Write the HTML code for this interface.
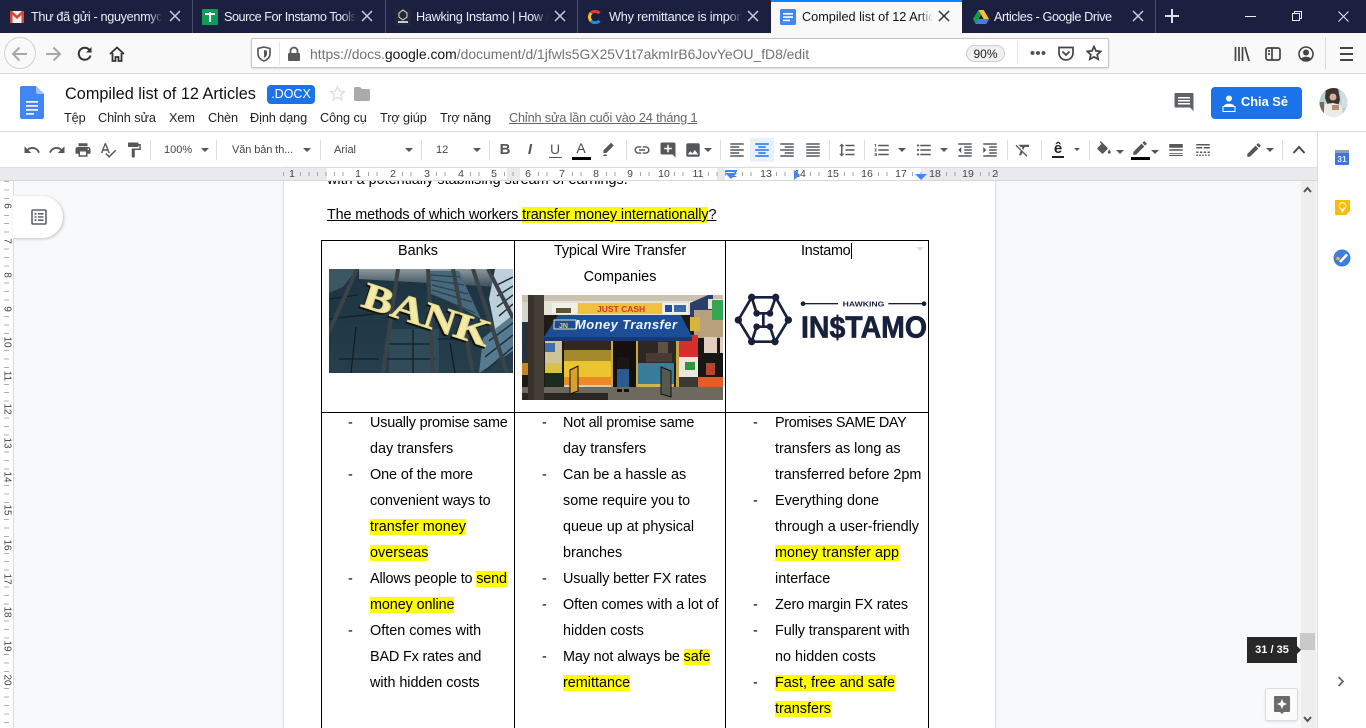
<!DOCTYPE html>
<html><head><meta charset="utf-8"><title>Compiled list of 12 Articles</title>
<style>
html,body{margin:0;padding:0;width:1366px;height:728px;overflow:hidden;background:#f8f9fa;font-family:"Liberation Sans","Noto Sans CJK SC",sans-serif;}
.a,svg.i,.t,.l,.m,.n,.v,.x,.c,.s,.tb{position:absolute}
svg{display:block;overflow:hidden}
.t{top:9px;height:17px;line-height:17px;font-size:12.7px;color:#eceef4;white-space:nowrap;overflow:hidden}
.t i{position:absolute;right:0;top:0;width:14px;height:17px;background:linear-gradient(90deg,rgba(28,32,64,0),#1c2040)}
.x{top:10px;width:12px;height:12px}
.s{top:0;width:1px;height:33px;background:#4a4e6b}
.m{top:110px;font-size:12.7px;line-height:17px;color:#222;white-space:nowrap;letter-spacing:-.08px}
.tb{top:143px;font-size:11px;line-height:15px;color:#444;white-space:nowrap}
.sp{position:absolute;top:140px;width:1px;height:20px;background:#dadce0}
.c{top:148px;width:0;height:0;border-left:4px solid transparent;border-right:4px solid transparent;border-top:4px solid #555}
svg.i{width:18px;height:18px;top:141px;fill:#55585b}
.n{top:168px;font-size:10.5px;line-height:12px;color:#444;width:16px;text-align:center}
.v{left:0;width:13px;height:12px;line-height:12px;font-size:10px;color:#444;text-align:center;transform:rotate(90deg)}
.l{height:26px;line-height:26px;font-size:14.4px;color:#000;white-space:nowrap;margin-top:1px}
.l b{font-weight:normal;background:#ff0}
</style></head><body>

<!-- Tab bar -->
<div class="a" style="left:0;top:0;width:1366px;height:33px;background:#1c2040"></div>
<div class="s" style="left:192px"></div><div class="s" style="left:385px"></div><div class="s" style="left:577px"></div><div class="s" style="left:1155px"></div>
<div class="a" style="left:771px;top:0;width:191px;height:33px;background:#f9f9fa;border-top:2px solid #0a84ff;box-sizing:border-box"></div>

<svg class="a" style="left:10px;top:10px" width="14" height="14" viewBox="0 0 14 14"><rect y="1" width="14" height="12" fill="#eee"/><path d="M0 1h2l5 4.500L12 1h2v12h-2.500V5L7 9 2.500 5v8H0z" fill="#d44638"/></svg>
<div class="t" style="left:31px;width:132px;letter-spacing:-.35px">Thư đã gửi - nguyenmych<i></i></div>
<svg class="x" style="left:169px" viewBox="0 0 12 12"><path d="M1 1l10 10M11 1L1 11" stroke="#ccced8" stroke-width="1.500"/></svg>

<div class="a" style="left:202px;top:9px;width:16px;height:16px;background:#0f9d58;border-radius:1px"></div>
<div class="a" style="left:205px;top:13px;width:10px;height:2px;background:#fff"></div>
<div class="a" style="left:209px;top:12px;width:2px;height:10px;background:#fff"></div>
<div class="t" style="left:224px;width:132px;letter-spacing:-.5px">Source For Instamo Tools<i></i></div>
<svg class="x" style="left:361px" viewBox="0 0 12 12"><path d="M1 1l10 10M11 1L1 11" stroke="#ccced8" stroke-width="1.500"/></svg>

<svg class="a" style="left:395px;top:9px" width="16" height="16" viewBox="0 0 16 16"><rect width="16" height="16" fill="#242736"/><path d="M8 1l4 3v4l-4 3-4-3V4z" fill="none" stroke="#ddd"/><rect x="3" y="12" width="10" height="2" fill="#ccc"/></svg>
<div class="t" style="left:416px;width:132px;letter-spacing:-.3px">Hawking Instamo | How r<i></i></div>
<svg class="x" style="left:554px" viewBox="0 0 12 12"><path d="M1 1l10 10M11 1L1 11" stroke="#ccced8" stroke-width="1.500"/></svg>

<svg class="a" style="left:588px;top:10px" width="14" height="14" viewBox="0 0 14 14" fill="none" stroke-width="3"><path d="M11.500 3.200A6 6 0 0 0 3 3" stroke="#e53935"/><path d="M3 3a6 6 0 0 0 0 8" stroke="#fbc02d"/><path d="M3 11a6 6 0 0 0 8.500-.200" stroke="#1e88e5"/></svg>
<div class="t" style="left:609px;width:133px;letter-spacing:-.2px">Why remittance is import<i></i></div>
<svg class="x" style="left:747px" viewBox="0 0 12 12"><path d="M1 1l10 10M11 1L1 11" stroke="#ccced8" stroke-width="1.500"/></svg>

<svg class="a" style="left:780px;top:9px" width="16" height="16" viewBox="0 0 16 16"><rect width="16" height="16" rx="1.500" fill="#4285f4"/><path d="M3 4h10v1.600H3zM3 7.300h10v1.600H3zM3 10.600h7v1.600H3z" fill="#fff"/></svg>
<div class="t" style="left:802px;width:131px;color:#111">Compiled list of 12 Articles<i style="background:linear-gradient(90deg,rgba(249,249,250,0),#f9f9fa)"></i></div>
<svg class="x" style="left:938px" viewBox="0 0 12 12"><path d="M1 1l10 10M11 1L1 11" stroke="#333" stroke-width="1.500"/></svg>

<svg class="a" style="left:973px;top:10px" width="16" height="14" viewBox="0 0 16 14"><path d="M5.300 0h5.400L16 9h-5.300z" fill="#fbc02d"/><path d="M5.300 0L0 9l2.700 5 5.300-9z" fill="#0f9d58"/><path d="M2.700 14h10.600L16 9H5.300z" fill="#3f7ee8"/></svg>
<div class="t" style="left:994px;width:130px;letter-spacing:-.4px">Articles - Google Drive</div>
<svg class="x" style="left:1132px" viewBox="0 0 12 12"><path d="M1 1l10 10M11 1L1 11" stroke="#ccced8" stroke-width="1.500"/></svg>

<svg class="a" style="left:1164px;top:8px" width="16" height="16" viewBox="0 0 16 16"><path d="M8 1v14M1 8h14" stroke="#dfe0e8" stroke-width="2"/></svg>
<svg class="a" style="left:1245px;top:15px" width="12" height="3" viewBox="0 0 12 3"><rect y="1" width="11" height="1" fill="#eee"/></svg>
<svg class="a" style="left:1291px;top:10px" width="12" height="12" viewBox="0 0 12 12" fill="none" stroke="#eee"><rect x="1.500" y="3.500" width="7" height="7"/><path d="M3.500 3.500v-2h7v7h-2"/></svg>
<svg class="a" style="left:1338px;top:11px" width="11" height="11" viewBox="0 0 11 11"><path d="M.5.500l10 10M10.500.500l-10 10" stroke="#eee"/></svg>

<!-- Firefox nav -->
<div class="a" style="left:0;top:33px;width:1366px;height:40px;background:#f9f9fa;border-bottom:1px solid #d7d7db"></div>
<div class="a" style="left:4px;top:37px;width:32px;height:32px;border:1px solid #d0d0d4;border-radius:50%;box-sizing:border-box"></div>
<svg class="a" style="left:11px;top:45px" width="18" height="18" viewBox="0 0 18 18" fill="none" stroke="#a8a8ab" stroke-width="2"><path d="M16 9H2M8.500 2.500L2 9l6.500 6.500"/></svg>
<svg class="a" style="left:44px;top:45px" width="18" height="18" viewBox="0 0 18 18" fill="none" stroke="#a8a8ab" stroke-width="2"><path d="M2 9h14M9.500 2.500L16 9l-6.500 6.500"/></svg>
<svg class="a" style="left:77px;top:46px" width="16" height="16" viewBox="0 0 16 16" fill="none" stroke="#333" stroke-width="2"><path d="M13.500 9.500A6 6 0 1 1 12 3.500L14 6"/><path d="M14.500 1v5.500H9" fill="#333" stroke="none"/></svg>
<svg class="a" style="left:109px;top:46px" width="16" height="16" viewBox="0 0 16 16" fill="none" stroke="#333" stroke-width="1.800"><path d="M1 8l7-6.500L15 8M3.500 7v8h3v-4h3v4h3V7"/></svg>

<div class="a" style="left:251px;top:38px;width:858px;height:30px;background:#fff;border:1px solid #c5c5c8;border-radius:2px;box-sizing:border-box;box-shadow:0 1px 2px rgba(0,0,0,.12)"></div>
<svg class="a" style="left:257px;top:46px" width="14" height="16" viewBox="0 0 14 16" fill="none" stroke="#555" stroke-width="1.600"><path d="M7 1l6 1.500V8c0 3.500-3 6-6 7-3-1-6-3.500-6-7V2.500z"/><path d="M7 4l3 .800V8c0 2-1.500 3-3 3.800z" fill="#555" stroke="none"/></svg>
<div class="a" style="left:279px;top:42px;width:1px;height:23px;background:#e4e4e6"></div>
<svg class="a" style="left:287px;top:46px" width="14" height="16" viewBox="0 0 14 16"><path d="M2 7h10a1 1 0 0 1 1 1v6a1 1 0 0 1-1 1H2a1 1 0 0 1-1-1V8a1 1 0 0 1 1-1z" fill="#595959"/><path d="M3.500 7V5a3.500 3.500 0 0 1 7 0v2" fill="none" stroke="#595959" stroke-width="1.800"/></svg>
<div class="a" style="left:310px;top:45px;width:520px;height:18px;line-height:18px;font-size:13.9px;color:#737373;white-space:nowrap">https://docs.<span style="color:#111">google.com</span>/document/d/1jfwls5GX25V1t7akmIrB6JovYeOU_fD8/edit</div>
<div class="a" style="left:966px;top:45px;width:39px;height:17px;line-height:16px;text-align:center;background:#f0f0f1;border:1px solid #cfcfd2;border-radius:9px;font-size:12px;color:#222;box-sizing:border-box">90%</div>
<div class="a" style="left:1017px;top:42px;width:1px;height:22px;background:#e4e4e6"></div>
<svg class="a" style="left:1030px;top:50px" width="16" height="6" viewBox="0 0 16 6" fill="#555"><circle cx="2.500" cy="3" r="2"/><circle cx="8" cy="3" r="2"/><circle cx="13.500" cy="3" r="2"/></svg>
<svg class="a" style="left:1058px;top:45px" width="16" height="16" viewBox="0 0 16 16" fill="none" stroke="#444" stroke-width="1.700"><path d="M1 2.500h14v5.500a7 7 0 0 1-14 0z"/><path d="M4.500 6.500L8 10l3.500-3.500"/></svg>
<svg class="a" style="left:1086px;top:45px" width="16" height="16" viewBox="0 0 16 16" fill="none" stroke="#444" stroke-width="1.700"><path d="M8 1.500l2 4.400 4.700.5-3.500 3.200 1 4.700L8 11.900l-4.200 2.400 1-4.700L1.300 6.400 6 5.900z"/></svg>
<svg class="a" style="left:1234px;top:46px" width="16" height="16" viewBox="0 0 16 16" fill="none" stroke="#444" stroke-width="1.700"><path d="M1.500 1v14M5 1v14M8.500 1v14M11 1l4 14"/></svg>
<svg class="a" style="left:1265px;top:46px" width="16" height="16" viewBox="0 0 16 16" fill="none" stroke="#444" stroke-width="1.700"><rect x="1" y="2" width="14" height="12" rx="2"/><path d="M7 2v12M3 5h2M3 8h2"/></svg>
<svg class="a" style="left:1298px;top:46px" width="16" height="16" viewBox="0 0 16 16"><circle cx="8" cy="8" r="7" fill="none" stroke="#444" stroke-width="1.600"/><circle cx="8" cy="6.500" r="3" fill="#444"/><path d="M3 13c1-3 9-3 10 0-2 2-8 2-10 0z" fill="#444"/></svg>
<div class="a" style="left:1325px;top:37px;width:1px;height:32px;background:#dcdcde"></div>
<svg class="a" style="left:1340px;top:46px" width="14" height="15" viewBox="0 0 14 15" fill="#444"><rect y="1" width="13" height="2"/><rect y="7" width="13" height="2"/><rect y="13" width="13" height="2"/></svg>

<!-- Docs header -->
<div class="a" style="left:0;top:74px;width:1366px;height:58px;background:#fff"></div>
<svg class="a" style="left:20px;top:86px" width="24" height="33" viewBox="0 0 24 33"><path d="M2 0h14l8 8v23a2 2 0 0 1-2 2H2a2 2 0 0 1-2-2V2a2 2 0 0 1 2-2z" fill="#4285f4"/><path d="M16 0l8 8h-6a2 2 0 0 1-2-2z" fill="#a1c2fa"/><path d="M6 15h12v1.800H6zM6 19h12v1.800H6zM6 23h12v1.800H6zM6 27h8v1.800H6z" fill="#f1f1f1"/></svg>
<div class="a" style="left:65px;top:84px;height:21px;line-height:21px;font-size:16.3px;color:#111;white-space:nowrap">Compiled list of 12 Articles</div>
<div class="a" style="left:267px;top:85px;width:48px;height:19px;line-height:19px;background:#1a73e8;border-radius:4px;color:#fff;font-size:12.5px;text-align:center">.DOCX</div>
<svg class="a" style="left:329px;top:85px" width="17" height="17" viewBox="0 0 24 24" fill="none" stroke="#e0e0e0" stroke-width="2"><path d="M12 2.500l2.900 6.300 6.800.7-5.100 4.600 1.400 6.800L12 17.400l-6 3.500 1.400-6.800-5.100-4.600 6.800-.7z"/></svg>
<svg class="a" style="left:354px;top:87px" width="16" height="14" viewBox="0 0 16 14"><path d="M1.500 0H6l2 2h6.500A1.500 1.500 0 0 1 16 3.500v9a1.500 1.500 0 0 1-1.500 1.500h-13A1.500 1.500 0 0 1 0 12.500v-11A1.500 1.500 0 0 1 1.500 0z" fill="#aaa"/></svg>
<div class="m" style="left:64px">Tệp</div>
<div class="m" style="left:98px">Chỉnh sửa</div>
<div class="m" style="left:169px">Xem</div>
<div class="m" style="left:208px">Chèn</div>
<div class="m" style="left:250px">Định dạng</div>
<div class="m" style="left:320px">Công cụ</div>
<div class="m" style="left:380px">Trợ giúp</div>
<div class="m" style="left:440px">Trợ năng</div>
<div class="m" style="left:509px;color:#666;text-decoration:underline;letter-spacing:-.15px">Chỉnh sửa lần cuối vào 24 tháng 1</div>
<svg class="a" style="left:1174px;top:92px" width="20" height="20" viewBox="0 0 20 20"><path d="M1.500 1h17a1 1 0 0 1 1 1v17l-3.500-3.500H1.500a1 1 0 0 1-1-1V2a1 1 0 0 1 1-1z" fill="#5f6368"/><path d="M4 5h12v1.500H4zM4 8h12v1.500H4zM4 11h12v1.500H4z" fill="#fff"/></svg>
<div class="a" style="left:1211px;top:87px;width:91px;height:32px;background:#1a73e8;border-radius:4px"></div>
<svg class="a" style="left:1222px;top:95px" width="14" height="18" viewBox="0 0 14 18" fill="#fff"><circle cx="7" cy="3.500" r="3"/><path d="M2 11c0-3 10-3 10 0z"/><path d="M1 11.500h12v5H1z" fill="none" stroke="#fff"/></svg>
<div class="a" style="left:1241px;top:94px;line-height:16px;font-size:12.8px;font-weight:bold;color:#fff;white-space:nowrap">Chia Sẻ</div>
<svg class="a" style="left:1319px;top:88px" width="29" height="29" viewBox="0 0 29 29"><defs><clipPath id="av"><ellipse cx="14.500" cy="14.500" rx="14" ry="14.500"/></clipPath></defs><g clip-path="url(#av)"><rect width="29" height="29" fill="#b9cfd0"/><path d="M7 0h12l2 12-3 8H10L6 10z" fill="#3b3430"/><path d="M21 0h8v20h-6z" fill="#cfe0e2"/><circle cx="14" cy="9" r="3.500" fill="#d8b09c"/><path d="M4 29l2-13 8-1 8 2 3 12z" fill="#ecebe8"/><path d="M0 14h5v15H0z" fill="#7a6a5c"/><rect x="13" y="17" width="7" height="5" fill="#b98a6f"/></g></svg>

<!-- Toolbar -->
<div class="a" style="left:0;top:131px;width:1317px;height:37px;background:#fff;border-top:1px solid #dadce0;box-sizing:border-box"></div>
<svg class="i" style="left:23px" viewBox="0 0 24 24"><path d="M12.500 8c-2.650 0-5.050.99-6.900 2.600L2 7v9h9l-3.620-3.620c1.390-1.160 3.160-1.880 5.120-1.880 3.540 0 6.550 2.310 7.600 5.500l2.370-.78C21.080 11.030 17.150 8 12.500 8z"/></svg>
<svg class="i" style="left:48px" viewBox="0 0 24 24"><path d="M18.400 10.600C16.550 8.990 14.150 8 11.500 8c-4.650 0-8.580 3.030-9.960 7.220L3.900 16c1.050-3.190 4.050-5.500 7.600-5.500 1.950 0 3.730.72 5.120 1.880L13 16h9V7l-3.600 3.600z"/></svg>
<svg class="i" style="left:74px" viewBox="0 0 24 24"><path d="M19 8H5c-1.660 0-3 1.340-3 3v6h4v4h12v-4h4v-6c0-1.660-1.340-3-3-3zm-3 11H8v-5h8v5zm3-7c-.55 0-1-.45-1-1s.45-1 1-1 1 .45 1 1-.45 1-1 1zm-1-9H6v4h12V3z"/></svg>
<svg class="i" style="left:99px" viewBox="0 0 24 24"><path d="M12.450 16h2.090L9.430 3H7.570L2.460 16h2.090l1.120-3h5.640l1.140 3zm-6.020-5L8.500 5.480 10.570 11H6.430zm15.160.59l-8.090 8.090L9.830 16l-1.410 1.410 5.090 5.090L23 13l-1.410-1.410z"/></svg>
<svg class="i" style="left:125px" viewBox="0 0 24 24"><path d="M18 4V3c0-.55-.45-1-1-1H5c-.55 0-1 .45-1 1v4c0 .55.45 1 1 1h12c.55 0 1-.45 1-1V6h1v4H9v11c0 .55.45 1 1 1h2c.55 0 1-.45 1-1v-9h8V4h-3z"/></svg>
<div class="sp" style="left:150px"></div>
<div class="tb" style="left:164px">100%</div><div class="c" style="left:201px"></div>
<div class="sp" style="left:216px"></div>
<div class="tb" style="left:232px;letter-spacing:-.1px">Văn bản th...</div><div class="c" style="left:303px"></div>
<div class="sp" style="left:320px"></div>
<div class="tb" style="left:334px">Arial</div><div class="c" style="left:405px"></div>
<div class="sp" style="left:421px"></div>
<div class="tb" style="left:436px">12</div><div class="c" style="left:473px"></div>
<div class="sp" style="left:489px"></div>
<div class="a" style="left:499px;top:141px;width:12px;line-height:18px;font-size:15px;font-weight:bold;color:#555;text-align:center">B</div>
<div class="a" style="left:524px;top:141px;width:12px;line-height:18px;font-size:15px;font-weight:bold;font-style:italic;color:#555;text-align:center">I</div>
<div class="a" style="left:549px;top:140px;width:12px;line-height:18px;font-size:14px;color:#555;text-align:center;border-bottom:0">U</div>
<div class="a" style="left:549px;top:157px;width:13px;height:1px;background:#555"></div>
<div class="a" style="left:572px;top:140px;width:18px;line-height:17px;font-size:14px;color:#444;text-align:center">A</div>
<div class="a" style="left:572px;top:157px;width:19px;height:3px;background:#000"></div>
<svg class="i" style="left:599px" viewBox="0 0 24 24"><path d="M3 21h6l-1.500-2H5zM17.750 7L14 3.250l-10 10V17h3.750z" transform="translate(2 -1)"/></svg>
<div class="sp" style="left:626px"></div>
<svg class="i" style="left:633px" viewBox="0 0 24 24"><path d="M3.900 12c0-1.710 1.390-3.100 3.100-3.100h4V7H7c-2.760 0-5 2.240-5 5s2.240 5 5 5h4v-1.900H7c-1.710 0-3.100-1.390-3.100-3.100zM8 13h8v-2H8v2zm9-6h-4v1.900h4c1.710 0 3.100 1.390 3.100 3.100s-1.390 3.100-3.100 3.100h-4V17h4c2.760 0 5-2.240 5-5s-2.240-5-5-5z"/></svg>
<svg class="i" style="left:659px" viewBox="0 0 24 24"><path d="M22 4c0-1.100-.9-2-2-2H4c-1.100 0-2 .9-2 2v12c0 1.100.9 2 2 2h14l4 4V4zm-5 7h-4v4h-2v-4H7V9h4V5h2v4h4v2z"/></svg>
<svg class="i" style="left:684px" viewBox="0 0 24 24"><path d="M21 19V5c0-1.100-.9-2-2-2H5c-1.100 0-2 .9-2 2v14c0 1.100.9 2 2 2h14c1.100 0 2-.9 2-2zM8.500 13.500l2.500 3.010L14.500 12l4.500 6H5l3.500-4.500z"/></svg>
<div class="c" style="left:704px"></div>
<div class="sp" style="left:720px"></div>
<svg class="i" style="left:728px" viewBox="0 0 24 24"><path d="M15 15H3v2h12v-2zm0-8H3v2h12V7zM3 13h18v-2H3v2zm0 8h18v-2H3v2zM3 3v2h18V3H3z"/></svg>
<div class="a" style="left:750px;top:138px;width:24px;height:24px;background:#e8f0fe;border-radius:2px"></div>
<svg class="i" style="left:753px;fill:#1a73e8" viewBox="0 0 24 24"><path d="M7 15v2h10v-2H7zm-4 6h18v-2H3v2zm0-8h18v-2H3v2zm4-6v2h10V7H7zM3 3v2h18V3H3z"/></svg>
<svg class="i" style="left:778px" viewBox="0 0 24 24"><path d="M3 21h18v-2H3v2zm6-4h12v-2H9v2zm-6-4h18v-2H3v2zm6-4h12V7H9v2zM3 3v2h18V3H3z"/></svg>
<svg class="i" style="left:804px" viewBox="0 0 24 24"><path d="M3 21h18v-2H3v2zm0-4h18v-2H3v2zm0-4h18v-2H3v2zm0-4h18V7H3v2zm0-6v2h18V3H3z"/></svg>
<div class="sp" style="left:829px"></div>
<svg class="i" style="left:838px" viewBox="0 0 24 24"><path d="M6 7h2.500L5 3.500 1.500 7H4v10H1.500L5 20.500 8.500 17H6V7zm4-2v2h12V5H10zm0 14h12v-2H10v2zm0-6h12v-2H10v2z"/></svg>
<div class="sp" style="left:864px"></div>
<svg class="i" style="left:873px" viewBox="0 0 24 24"><path d="M2 17h2v.5H3v1h1v.5H2v1h3v-4H2v1zm1-9h1V4H2v1h1v3zm-1 3h1.800L2 13.100v.9h3v-1H3.200L5 10.900V10H2v1zm5-6v2h14V5H7zm0 14h14v-2H7v2zm0-6h14v-2H7v2z"/></svg>
<div class="c" style="left:898px"></div>
<svg class="i" style="left:915px" viewBox="0 0 24 24"><path d="M4 10.500c-.83 0-1.500.67-1.500 1.500s.67 1.500 1.500 1.500 1.500-.67 1.500-1.500-.67-1.500-1.500-1.500zm0-6c-.83 0-1.500.67-1.500 1.500S3.170 7.500 4 7.500 5.500 6.830 5.500 6 4.830 4.500 4 4.500zm0 12c-.83 0-1.500.68-1.500 1.500s.68 1.500 1.500 1.500 1.500-.68 1.500-1.500-.67-1.500-1.500-1.500zM7 19h14v-2H7v2zm0-6h14v-2H7v2zm0-8v2h14V5H7z"/></svg>
<div class="c" style="left:940px"></div>
<svg class="i" style="left:956px" viewBox="0 0 24 24"><path d="M11 17h10v-2H11v2zm-8-5l4 4V8l-4 4zm0 9h18v-2H3v2zM3 3v2h18V3H3zm8 6h10V7H11v2zm0 4h10v-2H11v2z"/></svg>
<svg class="i" style="left:981px" viewBox="0 0 24 24"><path d="M3 21h18v-2H3v2zM3 8v8l4-4-4-4zm8 9h10v-2H11v2zM3 3v2h18V3H3zm8 6h10V7H11v2zm0 4h10v-2H11v2z"/></svg>
<div class="sp" style="left:1007px"></div>
<svg class="i" style="left:1014px" viewBox="0 0 24 24"><path d="M3.270 5L2 6.270l6.970 6.970L6.500 19h3l1.570-3.660L16.730 21 18 19.730 3.550 5.270 3.270 5zM6 5v.18L8.820 8h2.400l-.72 1.680 2.100 2.100L14.210 8H20V5H6z"/></svg>
<div class="sp" style="left:1041px"></div>
<div class="a" style="left:1050px;top:140px;width:16px;line-height:18px;font-size:15px;font-weight:bold;color:#222;text-align:center">ê</div>
<div class="a" style="left:1052px;top:156px;width:12px;height:2px;background:#222"></div>
<div class="c" style="left:1074px;border-left-width:3px;border-right-width:3px;border-top-width:3px"></div>
<div class="sp" style="left:1089px"></div>
<svg class="i" style="left:1095px" viewBox="0 0 24 24"><path d="M16.560 8.940L7.620 0 6.210 1.410l2.380 2.380-5.150 5.150c-.59.590-.59 1.540 0 2.120l5.500 5.500c.29.290.68.440 1.060.440s.77-.15 1.060-.44l5.500-5.500c.59-.58.59-1.530 0-2.120zM19 11.500s-2 2.170-2 3.500c0 1.100.9 2 2 2s2-.9 2-2c0-1.330-2-3.500-2-3.500z"/></svg>
<div class="c" style="left:1116px;top:150px"></div>
<svg class="i" style="left:1131px;top:139px" viewBox="0 0 24 24"><path d="M3 17.250V21h3.750L17.810 9.940l-3.750-3.750L3 17.250zM20.710 7.040c.39-.39.39-1.020 0-1.410l-2.340-2.340c-.39-.39-1.020-.39-1.410 0l-1.830 1.830 3.750 3.750 1.830-1.830z"/></svg>
<div class="a" style="left:1131px;top:157px;width:19px;height:3px;background:#000"></div>
<div class="c" style="left:1151px;top:150px"></div>
<svg class="i" style="left:1167px" viewBox="0 0 24 24"><path d="M3 17h18v-1H3v1zm0 3h18v-1.500H3V20zm0-7h18v-2H3v2zM3 4v5h18V4H3z"/></svg>
<svg class="i" style="left:1194px" viewBox="0 0 24 24"><path d="M3 16h3v-2H3v2zm5 0h3v-2H8v2zm5 0h3v-2h-3v2zm5 0h3v-2h-3v2zM3 20h2v-2H3v2zm4 0h2v-2H7v2zm4 0h2v-2h-2v2zm4 0h2v-2h-2v2zm4 0h2v-2h-2v2zM3 10h8V8H3v2zm10 0h8V8h-8v2zM3 4v2h18V4H3z"/></svg>
<svg class="i" style="left:1245px" viewBox="0 0 24 24"><path d="M3 17.250V21h3.750L17.810 9.940l-3.750-3.750L3 17.250zM20.710 7.040c.39-.39.39-1.020 0-1.410l-2.340-2.340c-.39-.39-1.020-.39-1.410 0l-1.830 1.830 3.750 3.750 1.830-1.830z"/></svg>
<div class="c" style="left:1266px"></div>
<div class="sp" style="left:1282px"></div>
<svg class="a" style="left:1292px;top:145px" width="14" height="9" viewBox="0 0 14 9" fill="none" stroke="#474a4d" stroke-width="2"><path d="M1.500 8L7 2l5.500 6"/></svg>

<!-- Document -->
<div class="a" style="left:0;top:168px;width:1300px;height:560px;background:#f8f9fa"></div>
<div class="a" style="left:284px;top:168px;width:711px;height:560px;background:#fff;box-shadow:0 0 2px rgba(0,0,0,.3)"></div>

<div class="l" style="left:327px;top:166px">with a potentially stabilising stream of earnings.</div>
<div class="l" style="left:327px;top:201px;text-decoration:underline"><span style="letter-spacing:-.14px">The methods of which workers </span><b style="letter-spacing:-.08px">transfer money internationally</b>?</div>

<!-- table lines -->
<div class="a" style="left:321px;top:240px;width:608px;height:1px;background:#000"></div>
<div class="a" style="left:321px;top:412px;width:608px;height:1px;background:#000"></div>
<div class="a" style="left:321px;top:240px;width:1px;height:488px;background:#000"></div>
<div class="a" style="left:514px;top:240px;width:1px;height:488px;background:#000"></div>
<div class="a" style="left:725px;top:240px;width:1px;height:488px;background:#000"></div>
<div class="a" style="left:928px;top:240px;width:1px;height:488px;background:#000"></div>

<div class="l" style="left:322px;width:192px;top:237px;text-align:center">Banks</div>
<div class="l" style="left:515px;width:210px;top:237px;text-align:center;letter-spacing:-.15px">Typical Wire Transfer</div>
<div class="l" style="left:515px;width:210px;top:263px;text-align:center">Companies</div>
<div class="l" style="left:801px;top:237px;letter-spacing:-.25px">Instamo</div>
<div class="a" style="left:851px;top:243px;width:1px;height:16px;background:#000"></div>
<div class="a" style="left:916px;top:247px;width:0;height:0;border-left:4px solid transparent;border-right:4px solid transparent;border-top:4px solid #ddd"></div>

<!-- Bank image -->
<svg class="a" style="left:329px;top:269px" width="184" height="104" viewBox="0 0 184 104">
<defs><linearGradient id="tp" x1="0" y1="0" x2="0" y2="1"><stop offset="0" stop-color="#8d979c"/><stop offset="1" stop-color="#3a4f5c"/></linearGradient><linearGradient id="btm" x1="0" y1="0" x2="0" y2="1"><stop offset="0" stop-color="#1c3240"/><stop offset="1" stop-color="#263f4d"/></linearGradient></defs>
<rect width="184" height="104" fill="url(#btm)"/>
<path d="M0 0h28L14 18 0 24z" fill="#3c5664"/>
<path d="M30 0H160L170 18 100 14 30 10z" fill="url(#tp)"/>
<path d="M100 2h30l22 48-24-14-28-12z" fill="#48697c"/>
<path d="M101 6l30 2M102 11l33 5M103 16l36 9M103 21l40 12M104 26l42 18" stroke="#2a4250" stroke-width="1.200"/>
<path d="M60 60h50v44H60z" fill="#3a5765" opacity=".55"/>
<path d="M150 104L184 82V45l-30 24z" fill="#567a90"/>
<path d="M166 0h18v46l-18 14-6-30z" fill="#bcd0dc"/>
<path d="M184 8l-18 9M184 17l-16 10M184 26l-16 12M184 35l-14 12M184 54l-24 18M184 66l-28 22M184 78l-28 24" stroke="#1d2f3a" stroke-width="1.500"/>
<path d="M0 30l28-4M0 50l45-5M10 90H50M60 75h44M108 70h36M56 90h50" stroke="#10202a" stroke-width="1.200"/>
<g fill="none" stroke="#3c4347" stroke-width="4"><path d="M28 0L0 63"/><path d="M69 0L54 104"/><path d="M99 0l5 104"/><path d="M124 0l20 104"/><path d="M144 0l34 104"/><path d="M159 0l25 49"/></g>
<g stroke="#121a20" stroke-width="1.200" fill="none"><path d="M22 104l5-46M84 104V60M126 104l-5-30"/></g>
<g transform="translate(31 37) rotate(18)"><text x="0" y="0" font-size="37" font-weight="bold" font-family="Liberation Serif,serif" fill="#f3eaa8" stroke="#e2d78f" stroke-width="1" textLength="132" lengthAdjust="spacingAndGlyphs" style="filter:drop-shadow(-1px 2px 0 #15120a)">BANK</text></g>
</svg>

<!-- Money Transfer image -->
<svg class="a" style="left:522px;top:295px;" width="201" height="105" viewBox="0 0 201 105">
<g style="filter:blur(.35px)">
<rect width="201" height="105" fill="#1f1a16"/>
<rect width="201" height="7" fill="#c9c2b0"/>
<rect x="0" y="7" width="6" height="20" fill="#d8d5cc"/>
<rect x="22" y="6" width="150" height="14" fill="#e6e2d6"/>
<rect x="56" y="8" width="84" height="11" fill="#efc041"/>
<text x="75" y="17" font-size="8.500" font-weight="bold" fill="#d8332a" font-family="Liberation Sans,sans-serif">JUST CASH</text>
<rect x="141" y="8" width="25" height="11" fill="#eef0f0"/><rect x="143" y="10" width="7" height="7" fill="#234c9a"/><rect x="152" y="10" width="12" height="7" fill="#3a6aa8"/>
<rect x="30" y="8" width="25" height="11" fill="#efefe8"/><rect x="34" y="13" width="15" height="5" fill="#5a5336"/>
<path d="M168 8l18-8h5v14l-23 10z" fill="#2b4068"/>
<rect x="186" y="4" width="15" height="10" fill="#e8e4d8"/>
<rect x="172" y="15" width="29" height="28" fill="#b9a27b"/><rect x="190" y="5" width="11" height="20" fill="#36a553"/>
<rect x="168" y="22" width="10" height="14" fill="#d8b53a"/>
<rect x="42" y="42" width="47" height="13" fill="#33261a"/><rect x="42" y="55" width="47" height="11" fill="#a58a2b"/><rect x="42" y="66" width="47" height="16" fill="#eac52f"/><rect x="42" y="82" width="47" height="8" fill="#ec8a28"/><rect x="42" y="90" width="47" height="3" fill="#d8cfae"/>
<rect x="89" y="42" width="2" height="52" fill="#c9a74a"/>
<rect x="91" y="42" width="23" height="50" fill="#14100e"/>
<rect x="95" y="62" width="12" height="12" fill="#191715"/><rect x="95" y="74" width="12" height="21" fill="#2a5a94"/>
<rect x="114" y="42" width="2" height="52" fill="#c9a74a"/>
<rect x="116" y="42" width="38" height="26" fill="#2e2823"/><rect x="136" y="47" width="10" height="14" fill="#5c5340"/><rect x="124" y="58" width="26" height="9" fill="#4b3a33"/>
<rect x="116" y="68" width="36" height="21" fill="#3a7d9a"/><rect x="116" y="89" width="36" height="5" fill="#cfb552"/>
<rect x="154" y="40" width="3" height="52" fill="#c7a549"/>
<rect x="157" y="40" width="19" height="22" fill="#d5302c"/><rect x="157" y="62" width="19" height="20" fill="#eae6dc"/><rect x="163" y="67" width="10" height="8" fill="#2e9441"/><rect x="157" y="82" width="19" height="10" fill="#3b3833"/>
<rect x="176" y="43" width="25" height="39" fill="#191716"/><rect x="182" y="42" width="13" height="16" fill="#e1cfc1"/><rect x="198" y="42" width="3" height="16" fill="#e1cfc1"/><rect x="184" y="68" width="9" height="12" fill="#b8442b"/><rect x="176" y="82" width="25" height="10" fill="#e35d28"/>
<rect x="23" y="42" width="17" height="36" fill="#cfc39a"/><rect x="23" y="48" width="10" height="9" fill="#3b6fb0"/><rect x="23" y="68" width="17" height="10" fill="#d9c243"/><rect x="23" y="78" width="18" height="20" fill="#1c2b20"/>
<rect x="0" y="27" width="6" height="43" fill="#28323c"/><rect x="0" y="68" width="6" height="12" fill="#c5862b"/>
<rect y="92" width="201" height="13" fill="#6d695f"/><rect x="0" y="98" width="86" height="7" fill="#2a2622"/>
<rect x="6" y="0" width="16" height="105" fill="#453e36"/><rect x="6" y="0" width="6" height="105" fill="#38322c"/>
<path d="M36 20H159L170 42H22z" fill="#1b4e97"/><path d="M22 42h148v4H22z" fill="#17396c"/>
<path d="M32 25h22v9H32z" fill="#1a4d95" stroke="#e7dfc0"/><text x="37" y="33" font-size="7" font-weight="bold" fill="#eccb6a" font-family="Liberation Sans,sans-serif">JN</text>
<text x="53" y="34" font-size="13" font-weight="bold" font-style="italic" fill="#eef3f8" font-family="Liberation Sans,sans-serif" textLength="102">Money Transfer</text>
<path d="M48 75l8-4v25l-8 3z" fill="#d8a02c" stroke="#111"/><path d="M139 72l10 4v26l-10-3z" fill="#555a4e" stroke="#111"/>
<rect x="95" y="94" width="5" height="3" fill="#111"/><rect x="102" y="94" width="5" height="3" fill="#111"/>
</g>
</svg>

<!-- Instamo logo -->
<svg class="a" style="left:725px;top:280px" width="203" height="80" viewBox="0 0 609 240">
<g fill="none" stroke="#17213c" stroke-width="8"><path d="M40 120L80 52H152L190 120 150 185H80Z"/><path d="M80 52L95 100H135L152 52M80 185L95 140H135L150 185M115 100V140"/></g>
<g fill="#17213c"><circle cx="40" cy="120" r="11"/><circle cx="80" cy="52" r="11"/><circle cx="152" cy="52" r="11"/><circle cx="190" cy="120" r="11"/><circle cx="150" cy="185" r="11"/><circle cx="80" cy="185" r="11"/><circle cx="95" cy="100" r="10"/><circle cx="135" cy="100" r="10"/><circle cx="95" cy="140" r="10"/><circle cx="135" cy="140" r="10"/><circle cx="234" cy="71" r="7"/><circle cx="597" cy="71" r="7"/>
<rect x="234" y="69" width="105" height="4"/><rect x="490" y="69" width="107" height="4"/>
<text x="353" y="79" font-size="22" font-weight="bold" font-family="Liberation Sans,sans-serif" textLength="125" lengthAdjust="spacingAndGlyphs">HAWKING</text>
<text x="228" y="172" font-size="92" font-weight="bold" stroke="#17213c" stroke-width="2" font-family="Liberation Sans,sans-serif" textLength="378" lengthAdjust="spacingAndGlyphs">IN$TAMO</text></g>
</svg>

<!-- Column 1 -->
<div class="l" style="left:348px;top:409px">-</div><div class="l" style="left:370px;top:409px;letter-spacing:-.2px">Usually promise same</div>
<div class="l" style="left:370px;top:435px">day transfers</div>
<div class="l" style="left:348px;top:461px">-</div><div class="l" style="left:370px;top:461px;letter-spacing:-.07px">One of the more</div>
<div class="l" style="left:370px;top:487px;letter-spacing:-.1px">convenient ways to</div>
<div class="l" style="left:370px;top:513px"><b>transfer money</b></div>
<div class="l" style="left:370px;top:539px"><b>overseas</b></div>
<div class="l" style="left:348px;top:565px">-</div><div class="l" style="left:370px;top:565px;letter-spacing:-.15px">Allows people to <b>send</b></div>
<div class="l" style="left:370px;top:591px;letter-spacing:-.1px"><b>money online</b></div>
<div class="l" style="left:348px;top:617px">-</div><div class="l" style="left:370px;top:617px">Often comes with</div>
<div class="l" style="left:370px;top:643px;letter-spacing:-.15px">BAD Fx rates and</div>
<div class="l" style="left:370px;top:669px;letter-spacing:-.05px">with hidden costs</div>

<!-- Column 2 -->
<div class="l" style="left:542px;top:409px">-</div><div class="l" style="left:563px;top:409px;letter-spacing:-.2px">Not all promise same</div>
<div class="l" style="left:563px;top:435px">day transfers</div>
<div class="l" style="left:542px;top:461px">-</div><div class="l" style="left:563px;top:461px">Can be a hassle as</div>
<div class="l" style="left:563px;top:487px">some require you to</div>
<div class="l" style="left:563px;top:513px;letter-spacing:-.05px">queue up at physical</div>
<div class="l" style="left:563px;top:539px">branches</div>
<div class="l" style="left:542px;top:565px">-</div><div class="l" style="left:563px;top:565px;letter-spacing:-.13px">Usually better FX rates</div>
<div class="l" style="left:542px;top:591px">-</div><div class="l" style="left:563px;top:591px;letter-spacing:-.12px">Often comes with a lot of</div>
<div class="l" style="left:563px;top:617px">hidden costs</div>
<div class="l" style="left:542px;top:643px">-</div><div class="l" style="left:563px;top:643px;letter-spacing:-.14px">May not always be <b>safe</b></div>
<div class="l" style="left:563px;top:669px"><b>remittance</b></div>

<!-- Column 3 -->
<div class="l" style="left:753px;top:409px">-</div><div class="l" style="left:775px;top:409px;letter-spacing:-.35px">Promises SAME DAY</div>
<div class="l" style="left:775px;top:435px">transfers as long as</div>
<div class="l" style="left:775px;top:461px">transferred before 2pm</div>
<div class="l" style="left:753px;top:487px">-</div><div class="l" style="left:775px;top:487px">Everything done</div>
<div class="l" style="left:775px;top:513px">through a user-friendly</div>
<div class="l" style="left:775px;top:539px"><b>money transfer app</b></div>
<div class="l" style="left:775px;top:565px">interface</div>
<div class="l" style="left:753px;top:591px">-</div><div class="l" style="left:775px;top:591px;letter-spacing:-.15px">Zero margin FX rates</div>
<div class="l" style="left:753px;top:617px">-</div><div class="l" style="left:775px;top:617px;letter-spacing:-.1px">Fully transparent with</div>
<div class="l" style="left:775px;top:643px">no hidden costs</div>
<div class="l" style="left:753px;top:669px">-</div><div class="l" style="left:775px;top:669px"><b>Fast, free and safe</b></div>
<div class="l" style="left:775px;top:695px"><b>transfers</b></div>

<!-- Horizontal ruler -->
<div class="a" style="left:0;top:167px;width:1317px;height:14px;background:#e8eaed;border-top:1px solid #dadce0;border-bottom:1px solid #d5d7da;box-sizing:border-box"></div>
<div class="a" style="left:327px;top:168px;width:180px;height:12px;background:#fff"></div>
<div class="a" style="left:520px;top:168px;width:197px;height:12px;background:#fff"></div>
<div class="a" style="left:725px;top:168px;width:196px;height:12px;background:#fff"></div>
<div class="a" style="left:283px;top:172px;width:716px;height:4px;background:repeating-linear-gradient(90deg,#a5a5a5 0,#a5a5a5 1px,transparent 1px,transparent 8.500px)"></div>
<div class="n" style="left:284px">1</div><div class="n" style="left:350px;background:#fff">1</div><div class="n" style="left:385px;background:#fff">2</div><div class="n" style="left:419px;background:#fff">3</div><div class="n" style="left:453px;background:#fff">4</div><div class="n" style="left:486px;background:#fff">5</div><div class="n" style="left:520px;background:#fff">6</div><div class="n" style="left:554px;background:#fff">7</div><div class="n" style="left:588px;background:#fff">8</div><div class="n" style="left:622px;background:#fff">9</div><div class="n" style="left:656px;background:#fff">10</div><div class="n" style="left:690px;background:#fff">11</div><div class="n" style="left:758px;background:#fff">13</div><div class="n" style="left:792px;background:#fff">14</div><div class="n" style="left:825px;background:#fff">15</div><div class="n" style="left:859px;background:#fff">16</div><div class="n" style="left:893px;background:#fff">17</div><div class="n" style="left:927px;background:#e8eaed">18</div><div class="n" style="left:960px;background:#e8eaed">19</div><div class="n" style="left:990px;width:10px">2</div>
<div class="a" style="left:731px;top:168px;font-size:10.500px;line-height:12px;color:#444">2</div>
<div class="a" style="left:725px;top:170px;width:12px;height:2px;background:#4285f4"></div>
<div class="a" style="left:725px;top:173px;width:0;height:0;border-left:6px solid transparent;border-right:6px solid transparent;border-top:6px solid #4285f4"></div>
<div class="a" style="left:794px;top:170px;width:0;height:0;border-top:5px solid transparent;border-bottom:5px solid transparent;border-left:6px solid #4285f4"></div>
<div class="a" style="left:915px;top:174px;width:0;height:0;border-left:6px solid transparent;border-right:6px solid transparent;border-top:6px solid #4285f4"></div>

<!-- Vertical ruler -->
<div class="a" style="left:0;top:181px;width:13px;height:547px;background:#fff;border-right:1px solid #dadce0;box-sizing:content-box"></div>
<div class="a" style="left:4px;top:181px;width:5px;height:547px;background:repeating-linear-gradient(180deg,#b0b0b0 0,#b0b0b0 1px,transparent 1px,transparent 8.450px)"></div>
<div class="v" style="top:200px;background:#fff">6</div><div class="v" style="top:235px;background:#fff">7</div><div class="v" style="top:269px;background:#fff">8</div><div class="v" style="top:303px;background:#fff">9</div><div class="v" style="top:336px;background:#fff">10</div><div class="v" style="top:370px;background:#fff">11</div><div class="v" style="top:403px;background:#fff">12</div><div class="v" style="top:437px;background:#fff">13</div><div class="v" style="top:471px;background:#fff">14</div><div class="v" style="top:504px;background:#fff">15</div><div class="v" style="top:539px;background:#fff">16</div><div class="v" style="top:573px;background:#fff">17</div><div class="v" style="top:606px;background:#fff">18</div><div class="v" style="top:640px;background:#fff">19</div><div class="v" style="top:674px;background:#fff">20</div>

<!-- Outline button -->
<div class="a" style="left:13px;top:196px;width:50px;height:42px;background:#fff;border-radius:0 21px 21px 0;box-shadow:1px 1px 3px rgba(0,0,0,.22)"></div>
<svg class="a" style="left:31px;top:209px" width="16" height="16" viewBox="0 0 16 16"><rect x="1" y="1" width="14" height="14" rx="1" fill="none" stroke="#5f6368" stroke-width="1.600"/><path d="M3.500 4h2v1.600h-2zM7 4h5.500v1.600H7zM3.500 7.200h2v1.600h-2zM7 7.200h5.500v1.600H7zM3.500 10.400h2V12h-2zM7 10.400h5.500V12H7z" fill="#5f6368"/></svg>

<!-- Scrollbar and side panel -->
<div class="a" style="left:1300px;top:181px;width:16px;height:547px;background:#eee;border-left:1px solid #f8f8f8;box-sizing:border-box"></div>
<div class="a" style="left:1300px;top:633px;width:15px;height:17px;background:#c9c9c9"></div>
<svg class="a" style="left:1303px;top:186px" width="9" height="7" viewBox="0 0 9 7" fill="none" stroke="#555" stroke-width="2"><path d="M1 6l3.500-4L8 6"/></svg>
<svg class="a" style="left:1303px;top:716px" width="9" height="7" viewBox="0 0 9 7" fill="none" stroke="#555" stroke-width="2"><path d="M1 1l3.500 4L8 1"/></svg>
<div class="a" style="left:1317px;top:131px;width:49px;height:597px;background:#fff;border-left:1px solid #dadce0;border-top:1px solid #dadce0;box-sizing:border-box"></div>
<div class="a" style="left:1247px;top:637px;width:50px;height:26px;line-height:26px;background:#282828;color:#fff;font-size:11px;font-weight:bold;text-align:center">31 / 35</div>
<div class="a" style="left:1297px;top:646px;width:0;height:0;border-top:4px solid transparent;border-bottom:4px solid transparent;border-left:4px solid #282828"></div>
<div class="a" style="left:1265px;top:688px;width:33px;height:33px;background:#fbfbfb;border:1px solid #dcdcdc;border-radius:3px;box-sizing:border-box;box-shadow:0 1px 2px rgba(0,0,0,.1)"></div>
<svg class="a" style="left:1274px;top:696px" width="16" height="19" viewBox="0 0 16 19"><path d="M1 0h14a1 1 0 0 1 1 1v14a1 1 0 0 1-1 1h-5l-2 2-2-2H1a1 1 0 0 1-1-1V1a1 1 0 0 1 1-1z" fill="#6b6b6b"/><path d="M8 3l1.500 3.500L13 8l-3.500 1.500L8 13l-1.500-3.500L3 8l3.500-1.500z" fill="#fff"/></svg>

<svg class="a" style="left:1335px;top:150px" width="14" height="15" viewBox="0 0 14 15"><rect width="14" height="15" rx="1" fill="#3f76d8"/><rect width="14" height="3" fill="#8f9db5"/><text x="7" y="12" font-size="8.500" font-weight="bold" fill="#d7e4fb" text-anchor="middle" font-family="Liberation Sans,sans-serif">31</text></svg>
<svg class="a" style="left:1335px;top:200px" width="15" height="15" viewBox="0 0 15 15"><path d="M0 1a1 1 0 0 1 1-1h13a1 1 0 0 1 1 1v10l-4 4H1a1 1 0 0 1-1-1z" fill="#fbbc04"/><circle cx="7.500" cy="6" r="3.300" fill="none" stroke="#fff" stroke-width="1.100"/><path d="M6 10.500h3M6.500 12h2" stroke="#fff"/></svg>
<svg class="a" style="left:1333px;top:249px" width="18" height="18" viewBox="0 0 18 18"><circle cx="9" cy="9" r="8.500" fill="#3f7ce0"/><circle cx="5" cy="9.500" r="1.800" fill="#fbbc04"/><path d="M7 13l7-7.500" stroke="#fff" stroke-width="2.600"/></svg>
<svg class="a" style="left:1337px;top:676px" width="8" height="11" viewBox="0 0 8 11" fill="none" stroke="#5f6368" stroke-width="1.700"><path d="M1.500 1l4.500 4.500L1.500 10"/></svg>

</body></html>
